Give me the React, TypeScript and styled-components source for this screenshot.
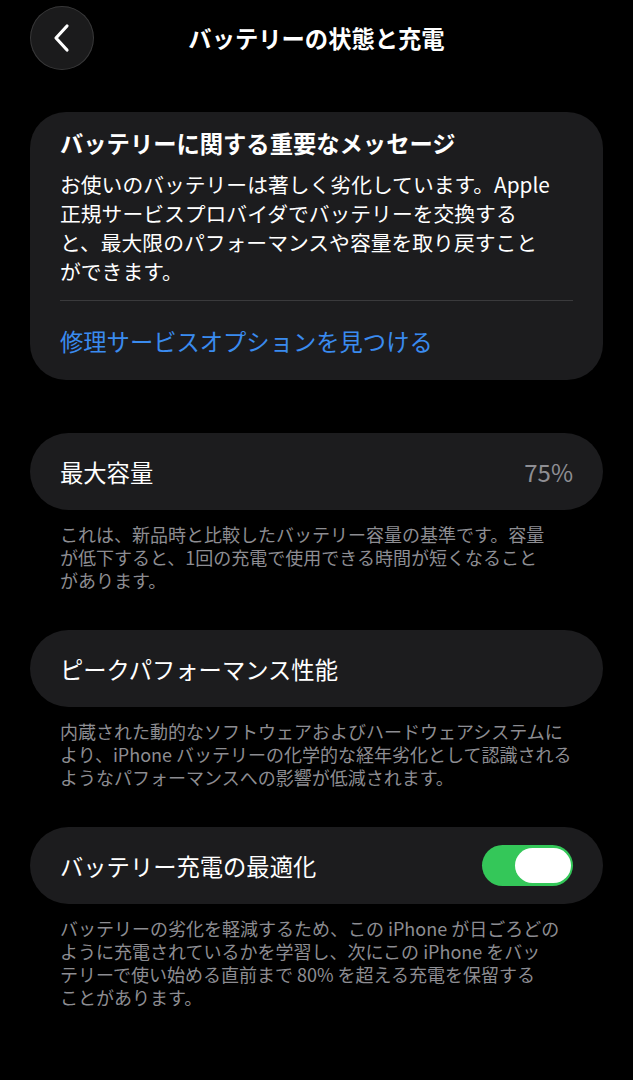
import React, { useState } from 'react';
import styled, { createGlobalStyle } from 'styled-components';

const GlobalStyle = createGlobalStyle`
  html, body {
    margin: 0;
    padding: 0;
    background: #000;
  }
  body {
    font-family: "Noto Sans CJK JP", "Noto Sans", sans-serif;
    color: #fff;
    -webkit-font-smoothing: antialiased;
  }
`;

const Page = styled.div`
  width: 633px;
  min-height: 1080px;
  box-sizing: border-box;
  padding: 6px 30px 40px;
  background: #000;
`;

const Header = styled.header`
  display: grid;
  grid-template-columns: 64px 1fr 64px;
  align-items: center;
  height: 64px;
`;

const BackButton = styled.button`
  width: 64px;
  height: 64px;
  border-radius: 50%;
  border: none;
  padding: 0;
  background: #1b1b1c;
  box-shadow: inset 0 0 0 1px rgba(255, 255, 255, 0.13);
  display: flex;
  align-items: center;
  justify-content: center;
  cursor: pointer;
`;

const Title = styled.h1`
  margin: 0;
  text-align: center;
  font-size: 23.3px;
  font-weight: 700;
  line-height: 30px;
  color: #fff;
`;

const MessageCard = styled.section`
  margin-top: 42px;
  background: #1c1c1e;
  border-radius: 36px;
  padding: 16px 30px 24px;
`;

const MessageTitle = styled.h2`
  margin: 0;
  font-size: 23.3px;
  font-weight: 700;
  line-height: 30px;
`;

const MessageBody = styled.p`
  margin: 12px 0 0;
  font-size: 20.8px;
  line-height: 29px;
  white-space: nowrap;
`;

const Divider = styled.div`
  margin-top: 14px;
  height: 1px;
  background: #3a3a3c;
`;

const Link = styled.a`
  display: block;
  margin-top: 25px;
  font-size: 23.3px;
  line-height: 30px;
  color: #3a8bef;
  text-decoration: none;
`;

const Section = styled.section<{ $gap: number }>`
  margin-top: ${p => p.$gap}px;
`;

const Row = styled.div`
  height: 77px;
  box-sizing: border-box;
  padding: 0 30px;
  border-radius: 38.5px;
  background: #1c1c1e;
  display: flex;
  align-items: center;
  justify-content: space-between;
`;

const RowLabel = styled.span`
  font-size: 23.3px;
  line-height: 30px;
`;

const RowValue = styled.span`
  font-size: 24px;
  line-height: 30px;
  color: #8e8e93;
`;

const Footnote = styled.p`
  margin: 13px 0 0;
  padding: 0 30px;
  font-size: 18px;
  line-height: 23px;
  color: #8d8d92;
  white-space: nowrap;
`;

const Track = styled.button<{ $on: boolean }>`
  width: 91px;
  height: 41px;
  border-radius: 20.5px;
  border: none;
  padding: 3px 2px;
  box-sizing: border-box;
  background: ${p => (p.$on ? '#34c759' : '#39393d')};
  display: flex;
  justify-content: ${p => (p.$on ? 'flex-end' : 'flex-start')};
  cursor: pointer;
`;

const Knob = styled.span`
  width: 56px;
  height: 35px;
  border-radius: 17.5px;
  background: #fff;
`;

function Chevron() {
  return (
    <svg width="18" height="30" viewBox="0 0 18 30">
      <polyline
        points="14,3 3,15 14,27"
        fill="none"
        stroke="#fff"
        strokeWidth="3.2"
        strokeLinecap="round"
        strokeLinejoin="round"
      />
    </svg>
  );
}

function Toggle({ on, onChange }: { on: boolean; onChange(v: boolean): void }) {
  return (
    <Track $on={on} onClick={() => onChange(!on)} aria-pressed={on}>
      <Knob />
    </Track>
  );
}

export default function App() {
  const [optimized, setOptimized] = useState(true);

  return (
    <>
      <GlobalStyle />
      <Page>
        <Header>
          <BackButton aria-label="戻る">
            <Chevron />
          </BackButton>
          <Title>バッテリーの状態と充電</Title>
          <span />
        </Header>

        <MessageCard>
          <MessageTitle>バッテリーに関する重要なメッセージ</MessageTitle>
          <MessageBody>
            お使いのバッテリーは著しく劣化しています。Apple
            <br />
            正規サービスプロバイダでバッテリーを交換する
            <br />
            と、最大限のパフォーマンスや容量を取り戻すこと
            <br />
            ができます。
          </MessageBody>
          <Divider />
          <Link href="#">修理サービスオプションを見つける</Link>
        </MessageCard>

        <Section $gap={53}>
          <Row>
            <RowLabel>最大容量</RowLabel>
            <RowValue>75%</RowValue>
          </Row>
          <Footnote>
            これは、新品時と比較したバッテリー容量の基準です。容量
            <br />
            が低下すると、1回の充電で使用できる時間が短くなること
            <br />
            があります。
          </Footnote>
        </Section>

        <Section $gap={38}>
          <Row>
            <RowLabel>ピークパフォーマンス性能</RowLabel>
          </Row>
          <Footnote>
            内蔵された動的なソフトウェアおよびハードウェアシステムに
            <br />
            より、iPhone バッテリーの化学的な経年劣化として認識される
            <br />
            ようなパフォーマンスへの影響が低減されます。
          </Footnote>
        </Section>

        <Section $gap={38}>
          <Row>
            <RowLabel>バッテリー充電の最適化</RowLabel>
            <Toggle on={optimized} onChange={setOptimized} />
          </Row>
          <Footnote>
            バッテリーの劣化を軽減するため、この iPhone が日ごろどの
            <br />
            ように充電されているかを学習し、次にこの iPhone をバッ
            <br />
            テリーで使い始める直前まで 80% を超える充電を保留する
            <br />
            ことがあります。
          </Footnote>
        </Section>
      </Page>
    </>
  );
}
